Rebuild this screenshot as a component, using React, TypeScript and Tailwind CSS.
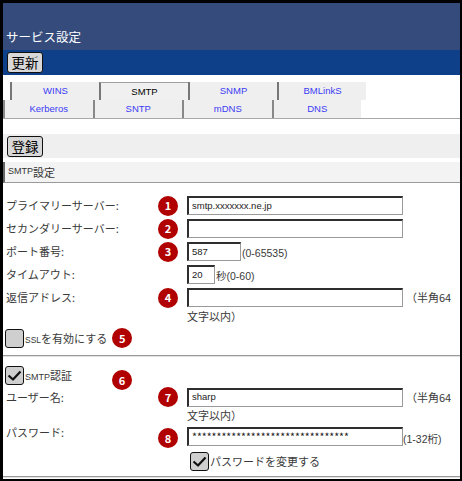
import React from "react";

const latin = "font-['Liberation_Sans','Noto_Sans_CJK_JP',sans-serif]";

const inputCls =
  "flex h-[19px] items-center border-t-2 border-l-2 border-r border-b border-t-[#2e2e2e] border-l-[#2e2e2e] border-r-[#9a9a9a] border-b-[#9a9a9a] bg-white pl-[3px] text-[9.5px] text-[#222] font-['Liberation_Sans','Noto_Sans_CJK_JP',sans-serif]";

function Badge({ n }: { n: number }) {
  return (
    <span className="flex h-[20px] w-[20px] shrink-0 items-center justify-center rounded-full bg-[#b00000] text-[11px] font-semibold leading-none text-white">
      {n}
    </span>
  );
}

function Check({ checked }: { checked?: boolean }) {
  return (
    <span className="flex h-[19px] w-[19px] shrink-0 items-center justify-center rounded-[3px] border-[1.5px] border-[#111] bg-[#cfcfcf]">
      {checked && (
        <svg width="15" height="13" viewBox="0 0 15 13">
          <path d="M1.5 6.5 L6 10.5 L13.5 2.5" fill="none" stroke="#111" strokeWidth="2.2" strokeLinejoin="round" />
        </svg>
      )}
    </span>
  );
}

function Btn({ label }: { label: string }) {
  return (
    <button className="flex h-[21px] w-[36px] items-center justify-center rounded-[3px] border-[1.5px] border-[#111] bg-[#d8d8d8] text-[13.5px] leading-none text-black">
      {label}
    </button>
  );
}

const tabs1 = ["WINS", "SMTP", "SNMP", "BMLinkS"];
const tabs2 = ["Kerberos", "SNTP", "mDNS", "DNS"];

export default function App() {
  return (
    <div className="h-[481px] w-[462px] overflow-hidden border-t-[3px] border-l-[3px] border-r-2 border-b-2 border-black bg-white font-['Noto_Sans_CJK_JP','Noto_Sans',sans-serif] text-[#3a3a3a]">
      {/* header */}
      <div className="flex h-[47px] items-end bg-[#344b7b] pb-[3px] pl-[3px] text-[12.5px] text-white">
        サービス設定
      </div>
      <div className="h-[25px] bg-[#0e3f89] pl-[4px] pt-[2px]">
        <Btn label="更新" />
      </div>

      {/* tabs */}
      <div className={`mt-[7px] flex pl-[7px] ${latin}`}>
        {tabs1.map((t) => (
          <div
            key={t}
            className={
              t === "SMTP"
                ? "h-[18px] w-[89px] border-l-2 border-t border-l-[#777] border-t-[#a0a0a0] bg-[#f0f0f0] text-center text-[9.5px] leading-[17px] text-black"
                : "h-[18px] w-[89px] border-l-2 border-l-[#777] bg-[#efefef] text-center text-[9.5px] leading-[18px] text-[#3b3bf5]"
            }
          >
            {t}
          </div>
        ))}
      </div>
      <div className={`flex border-b border-[#a8a8a8] ${latin}`}>
        {tabs2.map((t) => (
          <div
            key={t}
            className="h-[18px] w-[89.5px] border-l-2 border-l-[#888] bg-[#efefef] text-center text-[9.5px] leading-[18px] text-[#3b3bf5]"
          >
            {t}
          </div>
        ))}
      </div>

      {/* register bar */}
      <div className="mt-[15px] h-[24px] bg-[#efefef] pl-[4px] pt-[2px]">
        <Btn label="登録" />
      </div>
      <div className="mt-[4px] flex h-[21px] items-center border-l-2 border-b border-l-[#666] border-b-[#9a9a9a] bg-[#f3f3f3] pl-[3px] text-[11px] text-[#333]">
        <span className={`text-[9px] ${latin}`}>SMTP</span>設定
      </div>

      {/* form */}
      <div className="mt-[11px]">
        <div className="flex h-[23px] items-center">
          <div className="w-[155px] pl-[3px] text-[11px]">プライマリーサーバー:</div>
          <Badge n={1} />
          <div className={`${inputCls} ml-[9px] w-[216px]`}>smtp.xxxxxxx.ne.jp</div>
        </div>
        <div className="flex h-[23px] items-center">
          <div className="w-[155px] pl-[3px] text-[11px]">セカンダリーサーバー:</div>
          <Badge n={2} />
          <div className={`${inputCls} ml-[9px] w-[216px]`}></div>
        </div>
        <div className="flex h-[23px] items-center">
          <div className="w-[155px] pl-[3px] text-[11px]">ポート番号:</div>
          <Badge n={3} />
          <div className={`${inputCls} ml-[9px] w-[54px]`}>587</div>
          <span className={`ml-[1px] mt-[4px] text-[10.5px] ${latin}`}>(0-65535)</span>
        </div>
        <div className="flex h-[23px] items-center">
          <div className="w-[155px] pl-[3px] text-[11px]">タイムアウト:</div>
          <span className="w-[20px]" />
          <div className={`${inputCls} ml-[9px] w-[28px]`}>20</div>
          <span className={`ml-[1px] mt-[4px] text-[10.5px] ${latin}`}>秒(0-60)</span>
        </div>
        <div className="flex h-[23px] items-center">
          <div className="w-[155px] pl-[3px] text-[11px]">返信アドレス:</div>
          <Badge n={4} />
          <div className={`${inputCls} ml-[9px] w-[216px]`}></div>
          <span className="ml-[3px] text-[11px]">（半角64</span>
        </div>
        <div className="h-[14px] pl-[184px] text-[11px] leading-[14px]">文字以内）</div>

        <div className="mt-[5px] flex h-[20px] items-center pl-[2px]">
          <Check />
          <span className="ml-[1px] text-[11px]">
            <span className={`text-[8.5px] ${latin}`}>SSL</span>を有効にする
          </span>
          <span className="ml-[5px]">
            <Badge n={5} />
          </span>
        </div>

        <div className="mt-[7px] h-0 border-t border-b border-t-[#9a9a9a] border-b-[#e2e2e2]" />

        <div className="mt-[9px] flex h-[19px] items-start pl-[2px]">
          <Check checked />
          <span className="ml-[1px] mt-[1px] text-[11px]">
            <span className={`text-[9px] ${latin}`}>SMTP</span>認証
          </span>
          <span className="ml-[40px] mt-[4px]">
            <Badge n={6} />
          </span>
        </div>
        <div className="mt-[1px] flex h-[22px] items-center">
          <div className="w-[155px] pl-[3px] text-[11px]">ユーザー名:</div>
          <Badge n={7} />
          <div className={`${inputCls} ml-[9px] w-[216px]`}>sharp</div>
          <span className="ml-[3px] text-[11px]">（半角64</span>
        </div>
        <div className="h-[14px] pl-[184px] text-[11px] leading-[14px]">文字以内）</div>

        <div className="mt-[5px] flex h-[20px] items-start">
          <div className="-mt-[3px] w-[155px] pl-[3px] text-[11px]">パスワード:</div>
          <span className="mt-[1px]">
            <Badge n={8} />
          </span>
          <div className={`${inputCls} ml-[9px] w-[216px]`}>
            <span className="font-['Noto_Sans_CJK_JP',sans-serif] text-[10.5px]">********************************</span>
          </div>
          <span className={`mt-[5px] text-[10.5px] ${latin}`}>(1-32桁)</span>
        </div>
        <div className="mt-[5px] flex h-[19px] items-center pl-[187px]">
          <Check checked />
          <span className="ml-[1px] text-[11px]">パスワードを変更する</span>
        </div>
        <div className="mt-[5px] h-0 border-t border-b border-t-[#9a9a9a] border-b-[#e2e2e2]" />
      </div>
    </div>
  );
}
